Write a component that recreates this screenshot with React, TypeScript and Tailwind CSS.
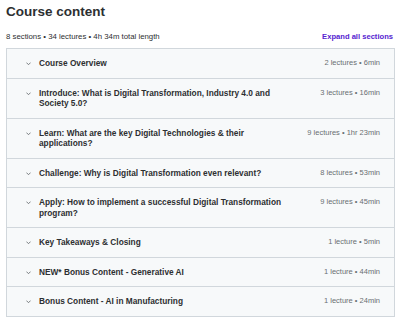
const sections = [
  { title: "Course Overview", meta: "2 lectures • 6min" },
  { title: "Introduce: What is Digital Transformation, Industry 4.0 and Society 5.0?", meta: "3 lectures • 16min" },
  { title: "Learn: What are the key Digital Technologies & their applications?", meta: "9 lectures • 1hr 23min" },
  { title: "Challenge: Why is Digital Transformation even relevant?", meta: "8 lectures • 53min" },
  { title: "Apply: How to implement a successful Digital Transformation program?", meta: "9 lectures • 45min" },
  { title: "Key Takeaways & Closing", meta: "1 lecture • 5min" },
  { title: "NEW* Bonus Content - Generative AI", meta: "1 lecture • 44min" },
  { title: "Bonus Content - AI in Manufacturing", meta: "1 lecture • 24min" },
];

function Chevron() {
  return (
    <svg width="5" height="4" viewBox="0 0 5 4" className="shrink-0 mt-[4px]">
      <path d="M0.7 0.9 L2.5 2.7 L4.3 0.9" fill="none" stroke="#6a6f73" strokeWidth="0.9" strokeLinecap="round" strokeLinejoin="round" />
    </svg>
  );
}

function App() {
  return (
    <div className="w-[400px] h-[317px] bg-white text-[#2d2f31] px-[6px] pt-[3px]" style={{ fontFamily: '"Liberation Sans", Arial, sans-serif' }}>
      <h2 className="text-[13.5px] font-bold leading-[18px]">Course content</h2>
      <div className="flex items-center justify-between mt-[8px] h-[16px] pr-[1px]">
        <span className="text-[7.8px] text-[#2d2f31]">8 sections • 34 lectures • 4h 34m total length</span>
        <span className="text-[7.6px] font-bold text-[#5624d0]">Expand all sections</span>
      </div>
      <div className="mt-[3px] border border-[#d1d7dc] bg-[#f7f9fa] w-[389px]">
        {sections.map((s, i) => (
          <div key={i} className={`flex items-start pl-[19px] pr-[14px] py-[9px] ${i > 0 ? "border-t border-[#d1d7dc]" : ""}`}>
            <Chevron />
            <div className="ml-[8px] w-[252px] text-[8.3px] font-bold leading-[10.5px]">{s.title}</div>
            <div className="ml-auto text-[7.5px] leading-[10.5px] text-[#6a6f73] whitespace-nowrap">{s.meta}</div>
          </div>
        ))}
      </div>
    </div>
  );
}

export default App;
